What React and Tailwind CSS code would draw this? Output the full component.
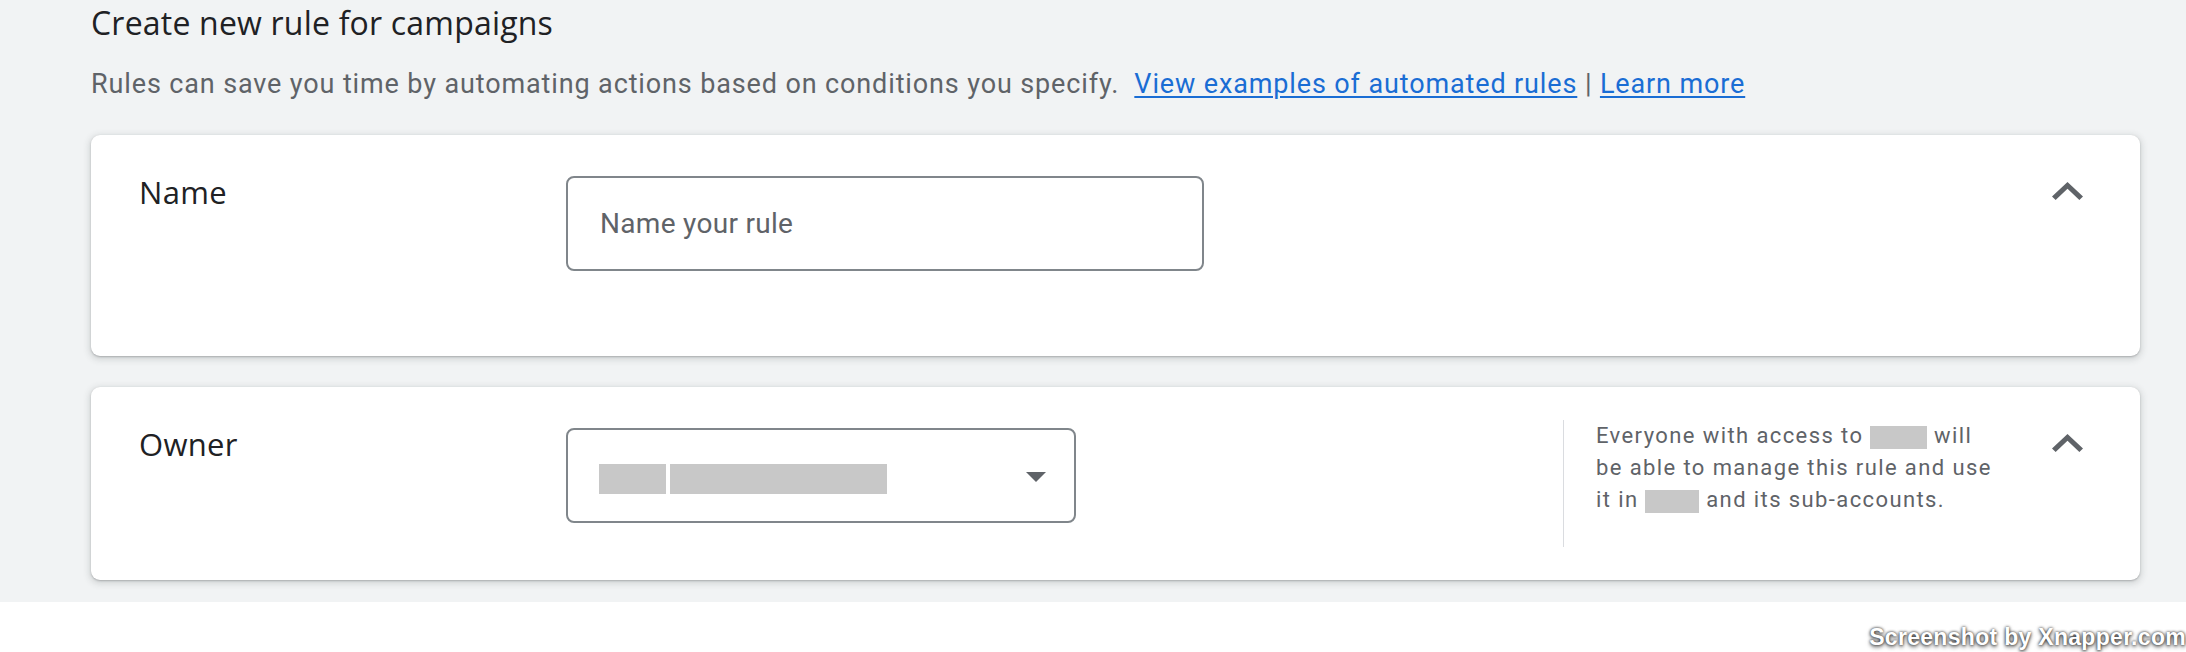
import React from "react";

const Chevron = ({ className = "" }) => (
  <svg
    className={className}
    width="31"
    height="18"
    viewBox="6 8 12 7.41"
    preserveAspectRatio="none"
    aria-hidden="true"
  >
    <path d="M12 8l-6 6 1.41 1.41L12 10.83l4.59 4.58L18 14z" fill="#5f6368" />
  </svg>
);

const Redact = ({ className = "" }) => (
  <span className={`inline-block bg-[#c8c8c8] align-middle ${className}`} />
);

export default function App() {
  return (
    <div className="relative w-full h-[652px] bg-white overflow-hidden">
      <div className="h-[602px] bg-[#f1f3f4] pl-[91px] pr-[46px] pt-[1px]">
        <h1 className="font-['Open_Sans',sans-serif] text-[32px] leading-[44px] tracking-[0.2px] text-[#202124] font-medium">
          Create new rule for campaigns
        </h1>
        <p className="mt-[21px] font-['Roboto',sans-serif] text-[27px] leading-[36px] tracking-[0.87px] text-[#5f6368]">
          Rules can save you time by automating actions based on conditions you specify.&nbsp;{" "}
          <a href="#" className="text-[#1a6dd4] underline decoration-[2px] underline-offset-[3px]">
            View examples of automated rules
          </a>{" "}
          |{" "}
          <a href="#" className="text-[#1a6dd4] underline decoration-[2px] underline-offset-[3px]">
            Learn more
          </a>
        </p>

        {/* Name card */}
        <section className="mt-[33px] flex items-start bg-white rounded-[9px] shadow-[0_1px_2px_0_rgba(60,64,67,0.3),0_2px_6px_2px_rgba(60,64,67,0.15)] pl-[48px] pr-[57px] pt-[32px] pb-[85px]">
          <div className="w-[427px] mt-[3px] font-['Open_Sans',sans-serif] text-[31px] leading-[44px] tracking-[0.3px] text-[#202124]">
            Name
          </div>
          <div className="mt-[9px] w-[638px] h-[95px] rounded-[8px] border-2 border-[#80868b] flex items-center pl-[32px]">
            <span className="font-['Roboto',sans-serif] text-[28px] tracking-[0.3px] text-[#5f6368]">
              Name your rule
            </span>
          </div>
          <div className="flex-1" />
          <Chevron className="mt-[15px] shrink-0" />
        </section>

        {/* Owner card */}
        <section className="mt-[31px] flex items-start bg-white rounded-[9px] shadow-[0_1px_2px_0_rgba(60,64,67,0.3),0_2px_6px_2px_rgba(60,64,67,0.15)] pl-[48px] pr-[57px] pt-[32px] pb-[33px]">
          <div className="w-[427px] mt-[3px] font-['Open_Sans',sans-serif] text-[31px] leading-[44px] tracking-[0.3px] text-[#202124]">
            Owner
          </div>
          <div className="mt-[9px] w-[510px] h-[95px] rounded-[8px] border-2 border-[#80868b] flex items-center pl-[31px] pr-[28px]">
            <div className="flex items-center gap-[4px] mt-[6px]">
              <Redact className="w-[67px] h-[30px]" />
              <Redact className="w-[217px] h-[30px]" />
            </div>
            <div className="flex-1" />
            <svg width="20" height="10" viewBox="0 0 20 10" aria-hidden="true" className="mt-[2px]">
              <path d="M0 0 L20 0 L10 10 Z" fill="#5f6368" />
            </svg>
          </div>
          <div className="flex-1" />
          <div className="mt-[1px] h-[127px] w-[453px] border-l border-[#dadce0] pl-[32px]">
            <p className="font-['Roboto',sans-serif] text-[22px] leading-[32px] tracking-[1.4px] text-[#5f6368]">
              Everyone with access to <Redact className="w-[57px] h-[23px]" /> will
              <br />
              be able to manage this rule and use
              <br />
              it in <Redact className="w-[54px] h-[23px]" /> and its sub-accounts.
            </p>
          </div>
          <Chevron className="ml-[36px] mt-[15px] shrink-0" />
        </section>
      </div>

      <div className="absolute right-[0px] bottom-[1px] font-['Liberation_Sans',sans-serif] font-bold text-[23px] leading-[28px] tracking-[0.3px] text-white [text-shadow:0_0_3px_rgba(0,0,0,0.9),0_2px_4px_rgba(0,0,0,0.6)]">
        Screenshot by Xnapper.com
      </div>
    </div>
  );
}
